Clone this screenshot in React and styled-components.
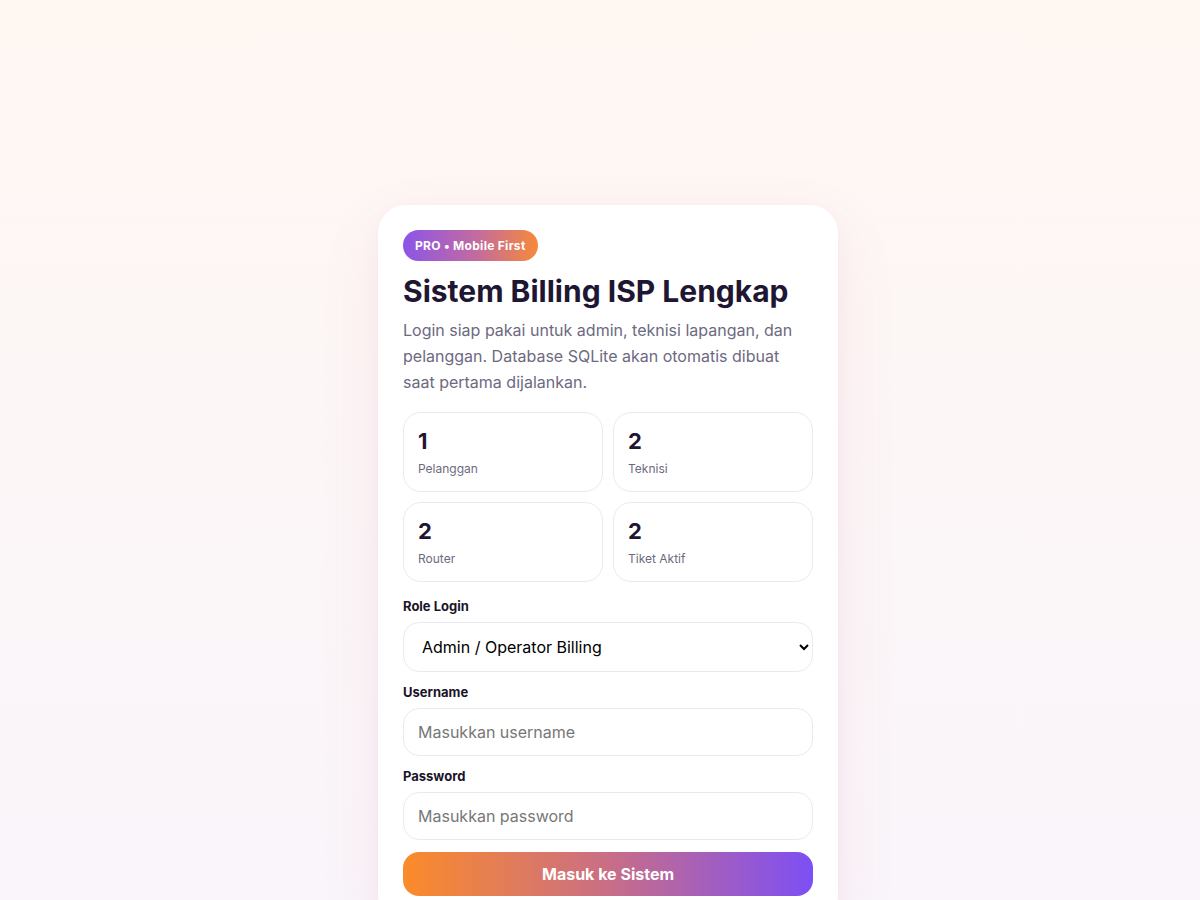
import React from "react";
import styled, { createGlobalStyle } from "styled-components";

const Global = createGlobalStyle`
  * { box-sizing: border-box; }
  html, body { margin: 0; padding: 0; }
  body {
    font-family: Inter, "Noto Sans", sans-serif;
    background: linear-gradient(180deg, #fff7f2 0%, #fcf6f6 40%, #f9f5fb 100%);
    min-height: 100vh;
  }
`;

const Page = styled.main`
  min-height: 100vh;
  display: flex;
  justify-content: center;
  align-items: flex-start;
  padding: 205px 0 40px 16px;
`;

const Card = styled.section`
  width: 460px;
  background: #ffffff;
  border-radius: 28px;
  padding: 25px 25px 28px;
  box-shadow: 0 24px 60px rgba(236, 120, 140, 0.10), 0 4px 18px rgba(160, 110, 200, 0.06);
`;

const Badge = styled.span`
  display: inline-flex;
  align-items: center;
  height: 31px;
  padding: 0 12px;
  border-radius: 999px;
  background: linear-gradient(90deg, #8b55e8 0%, #c46b9e 55%, #f58a3a 100%);
  color: #fff;
  font-size: 12px;
  font-weight: 700;
  letter-spacing: 0.3px;
`;

const Title = styled.h1`
  margin: 12px 0 8px;
  font-size: 30px;
  line-height: 36px;
  font-weight: 700;
  color: #1e1632;
`;

const Lead = styled.p`
  margin: 0 0 17px;
  font-size: 16px;
  line-height: 26px;
  color: #6d6a80;
`;

const Stats = styled.div`
  display: grid;
  grid-template-columns: 1fr 1fr;
  gap: 10px;
  margin-bottom: 16px;
`;

const Stat = styled.div`
  height: 80px;
  border: 1px solid #ebe8f3;
  border-radius: 18px;
  padding: 14px 14px;
  display: flex;
  flex-direction: column;
`;

const StatValue = styled.div`
  font-size: 22px;
  line-height: 28px;
  font-weight: 700;
  color: #1e1632;
`;

const StatLabel = styled.div`
  margin-top: 6px;
  font-size: 12px;
  line-height: 16px;
  color: #6d6a80;
`;

const Form = styled.form`
  display: flex;
  flex-direction: column;
  gap: 12px;
`;

const Field = styled.label`
  display: flex;
  flex-direction: column;
  gap: 8px;
`;

const Label = styled.span`
  font-size: 13px;
  line-height: 16px;
  font-weight: 700;
  color: #1a1428;
`;

const Select = styled.select`
  height: 50px;
  width: 100%;
  border: 1px solid #ebe8f3;
  border-radius: 16px;
  background: #fff;
  padding: 0 10px 0 14px;
  font-family: Inter, "Noto Sans", sans-serif;
  font-size: 16px;
  color: #000;
  outline: none;
`;

const Input = styled.input`
  height: 48px;
  width: 100%;
  border: 1px solid #ebe8f3;
  border-radius: 16px;
  background: #fff;
  padding: 0 14px;
  font-family: Inter, "Noto Sans", sans-serif;
  font-size: 16px;
  color: #1e1632;
  outline: none;
  &::placeholder { color: #777; }
`;

const Submit = styled.button`
  height: 44px;
  border: none;
  border-radius: 16px;
  background: linear-gradient(90deg, #fb8b2a 0%, #c96e86 50%, #7d4ff5 100%);
  color: #fff;
  font-family: Inter, "Noto Sans", sans-serif;
  font-size: 16px;
  font-weight: 700;
  cursor: pointer;
`;

const stats = [
  { value: 1, label: "Pelanggan" },
  { value: 2, label: "Teknisi" },
  { value: 2, label: "Router" },
  { value: 2, label: "Tiket Aktif" },
];

export default function App() {
  return (
    <>
      <Global />
      <Page>
        <Card>
          <Badge>PRO • Mobile First</Badge>
          <Title>Sistem Billing ISP Lengkap</Title>
          <Lead>
            Login siap pakai untuk admin, teknisi lapangan, dan pelanggan. Database SQLite akan otomatis dibuat saat pertama dijalankan.
          </Lead>
          <Stats>
            {stats.map((s) => (
              <Stat key={s.label}>
                <StatValue>{s.value}</StatValue>
                <StatLabel>{s.label}</StatLabel>
              </Stat>
            ))}
          </Stats>
          <Form onSubmit={(e) => e.preventDefault()}>
            <Field>
              <Label>Role Login</Label>
              <Select defaultValue="admin">
                <option value="admin">Admin / Operator Billing</option>
                <option value="teknisi">Teknisi Lapangan</option>
                <option value="pelanggan">Pelanggan</option>
              </Select>
            </Field>
            <Field>
              <Label>Username</Label>
              <Input placeholder="Masukkan username" />
            </Field>
            <Field>
              <Label>Password</Label>
              <Input type="password" placeholder="Masukkan password" />
            </Field>
            <Submit type="submit">Masuk ke Sistem</Submit>
          </Form>
        </Card>
      </Page>
    </>
  );
}
